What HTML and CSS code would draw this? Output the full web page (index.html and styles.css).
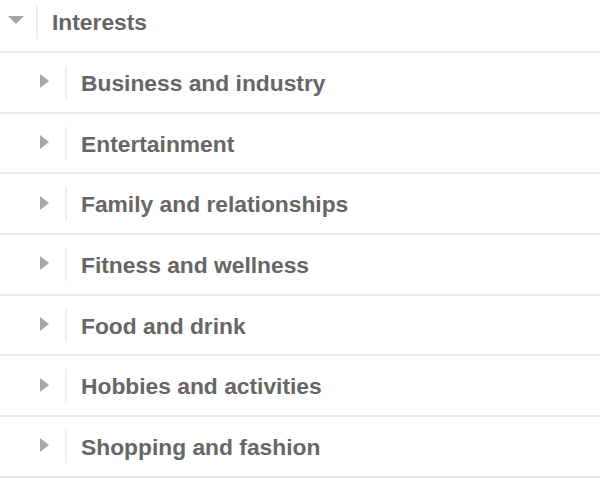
FILE: index.html
```html
<!DOCTYPE html>
<html>
<head>
    <title>Interests</title>
    <link rel="stylesheet" href="styles.css">
</head>
<body>
    <div class="tree">
        <div class="row head">
            <span class="arrow down"></span>
            <span class="sep"></span>
            <span class="label">Interests</span>
        </div>
        <div class="row child">
            <span class="arrow right"></span>
            <span class="sep"></span>
            <span class="label">Business and industry</span>
        </div>
        <div class="row child">
            <span class="arrow right"></span>
            <span class="sep"></span>
            <span class="label">Entertainment</span>
        </div>
        <div class="row child">
            <span class="arrow right"></span>
            <span class="sep"></span>
            <span class="label">Family and relationships</span>
        </div>
        <div class="row child">
            <span class="arrow right"></span>
            <span class="sep"></span>
            <span class="label">Fitness and wellness</span>
        </div>
        <div class="row child">
            <span class="arrow right"></span>
            <span class="sep"></span>
            <span class="label">Food and drink</span>
        </div>
        <div class="row child">
            <span class="arrow right"></span>
            <span class="sep"></span>
            <span class="label">Hobbies and activities</span>
        </div>
        <div class="row child">
            <span class="arrow right"></span>
            <span class="sep"></span>
            <span class="label">Shopping and fashion</span>
        </div>
    </div>
</body>
</html>
```

FILE: styles.css
```css
body { margin: 0; background: #fff; font-family: "Liberation Sans", Arial, sans-serif; }
.tree { width: 600px; }
.row { display: flex; border-bottom: 2px solid #e9e9ee; box-sizing: content-box; }
.head { height: 45px; padding: 6px 0 0 8px; align-items: flex-start; }
.child { height: 58.7px; padding-left: 40px; align-items: center; }
.sep { width: 2px; height: 33px; background: #eeeeee; margin-left: 13px; }
.label { font-size: 22.8px; font-weight: bold; color: #666; line-height: 33px; margin-left: 14px; }
.child .label { padding-top: 2px; }
.arrow { width: 0; height: 0; }
.down { border-top: 8px solid #a6a6a6; border-left: 8px solid transparent; border-right: 8px solid transparent; margin-top: 10px; margin-right: -1px; }
.right { border-left: 9px solid #a6a6a6; border-top: 7px solid transparent; border-bottom: 7px solid transparent; margin-top: -2px; margin-right: 3px; }
```
